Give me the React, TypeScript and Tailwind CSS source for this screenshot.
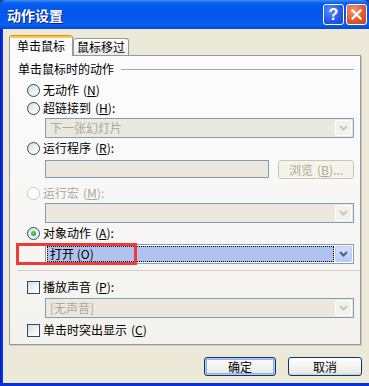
import React from "react";

const font = "font-['Noto_Sans_CJK_SC','Noto_Sans',sans-serif]";

function Chevron({ color }: { color: string }) {
  return (
    <svg width="9" height="6" viewBox="0 0 9 6">
      <path d="M1 1 L4.5 4.5 L8 1" fill="none" stroke={color} strokeWidth="2" />
    </svg>
  );
}

function Radio({ checked, disabled }: { checked?: boolean; disabled?: boolean }) {
  return (
    <span
      className={`flex h-[13px] w-[13px] shrink-0 items-center justify-center rounded-full border ${
        disabled
          ? "border-[#cac8bb] bg-white"
          : "border-[#1c5180] bg-[linear-gradient(135deg,#dcdad0_0%,#f4f4f0_60%,#ffffff_100%)]"
      }`}
    >
      {checked && <span className="h-[5px] w-[5px] rounded-full bg-[radial-gradient(circle_at_35%_35%,#55d855,#1a9c1a)]" />}
    </span>
  );
}

function Checkbox() {
  return (
    <span className="h-[13px] w-[13px] shrink-0 border border-[#1c5180] bg-[linear-gradient(135deg,#dcdad0_0%,#f4f4f0_60%,#ffffff_100%)]" />
  );
}

function Combo({ text, disabled, selected }: { text: string; disabled?: boolean; selected?: boolean }) {
  return (
    <div
      className={`flex h-[20px] items-center border border-[#7f9db9] ${
        disabled ? "bg-[#ebe9dd]" : "bg-white"
      }`}
    >
      <div className="flex h-full flex-1 items-center p-[1px]">
        {selected ? (
          <div className="flex h-full flex-1 items-center border border-dotted border-black bg-[#afc3ee] pl-[2px] leading-none">
            {text}
          </div>
        ) : (
          <div className={`pl-[3px] leading-none ${disabled ? "text-[#aca899]" : ""}`}>{text}</div>
        )}
      </div>
      <div
        className={`mr-[1px] flex h-[16px] w-[17px] items-center justify-center rounded-[2px] border ${
          disabled
            ? "border-white bg-[#f2f1ec]"
            : "border-[#b9ccf5] bg-[linear-gradient(to_bottom,#d3defc,#b7cbf8)]"
        }`}
      >
        <Chevron color={disabled ? "#c9c7ba" : "#4d6185"} />
      </div>
    </div>
  );
}

function Mn({ children }: { children: string }) {
  return (
    <span className="ml-[4px]">
      (<u>{children}</u>)
    </span>
  );
}

export default function App() {
  return (
    <div className={`flex h-[386px] w-[369px] flex-col overflow-hidden bg-[#1d3f91] text-[12px] text-black ${font}`}>
      {/* title bar */}
      <div className="flex h-[29px] items-center rounded-t-[6px] bg-[linear-gradient(to_bottom,#3d8ffb_0%,#0c62ec_10%,#0058ee_25%,#0556ea_55%,#0760ef_85%,#0348d4_100%)] pl-[7px] pr-[2px]">
        <span className="flex-1 text-[14px] font-bold leading-none text-white [text-shadow:1px_1px_0_#0a1e8c]">
          动作设置
        </span>
        <div className="flex items-center gap-[2px]">
          <div className="flex h-[21px] w-[21px] items-center justify-center rounded-[3px] border border-white bg-[radial-gradient(circle_at_35%_30%,#5c8ffb,#2257e6_60%,#1a47c8)] text-[16px] font-bold leading-none text-white font-['Liberation_Sans',sans-serif]">
            ?
          </div>
          <div className="flex h-[21px] w-[21px] items-center justify-center rounded-[3px] border border-white bg-[radial-gradient(circle_at_35%_30%,#f09a7a,#e05a30_55%,#c4401c)]">
            <svg width="11" height="11" viewBox="0 0 11 11">
              <path d="M1.5 1.5 L9.5 9.5 M9.5 1.5 L1.5 9.5" stroke="white" strokeWidth="2.2" strokeLinecap="square" />
            </svg>
          </div>
        </div>
      </div>

      <div className="flex flex-1">
        <div className="w-[3px] bg-[linear-gradient(to_right,#0019cf,#0a3de0)]" />
        <div className="flex flex-1 flex-col bg-[#ece9d8] pl-[6px] pt-[6px]">
          {/* tabs */}
          <div className="flex h-[21px] items-end">
            <div className="relative z-10 flex h-[21px] w-[64px] flex-col overflow-hidden rounded-t-[3px] border-x border-[#919b9c] bg-[#fcfcfe]">
              <div className="h-[1px] bg-[#e68b2c]" />
              <div className="h-[2px] bg-[#ffc73c]" />
              <div className="flex flex-1 items-center justify-center pb-[2px] leading-none">单击鼠标</div>
            </div>
            <div className="mb-px flex h-[17px] w-[56px] items-center justify-center rounded-t-[3px] border border-b-0 border-[#919b9c] bg-[linear-gradient(to_bottom,#ffffff,#ecebe6)] leading-none">
              鼠标移过
            </div>
          </div>

          {/* panel */}
          <div className="-mt-px flex h-[290px] w-[352px] flex-col border border-[#919b9c] bg-[linear-gradient(to_bottom,#fcfcfe,#f3f2ed)] shadow-[1px_1px_0_#d0cebf]">
            <div className="mt-[5px] flex h-[16px] items-center pl-[8px] pr-[6px]">
              <span className="leading-none">单击鼠标时的动作</span>
              <div className="ml-[7px] h-px flex-1 bg-[#aca899]" />
            </div>

            <div className="mt-[5px] flex h-[16px] items-center gap-[3px] pl-[17px] leading-none">
              <Radio />
              <span>
                无动作<Mn>N</Mn>
              </span>
            </div>

            <div className="mt-[2px] flex h-[16px] items-center gap-[3px] pl-[17px] leading-none">
              <Radio />
              <span>
                超链接到<Mn>H</Mn>:
              </span>
            </div>
            <div className="ml-[35px] mr-[6px] mt-[2px]">
              <Combo text="下一张幻灯片" disabled />
            </div>

            <div className="mt-[2px] flex h-[16px] items-center gap-[3px] pl-[17px] leading-none">
              <Radio />
              <span>
                运行程序<Mn>R</Mn>:
              </span>
            </div>
            <div className="ml-[35px] mr-[6px] mt-[4px] flex items-start gap-[9px]">
              <div className="h-[18px] flex-1 border border-[#7f9db9] bg-[#ebe9dd]" />
              <div className="flex h-[19px] w-[76px] items-center justify-center rounded-[3px] border border-[#c9c7ba] bg-[#f5f4ea] leading-none text-[#aca899]">
                浏览<Mn>B</Mn>...
              </div>
            </div>

            <div className="mt-[6px] flex h-[16px] items-center gap-[3px] pl-[17px] leading-none text-[#aca899]">
              <Radio disabled />
              <span>
                运行宏<Mn>M</Mn>:
              </span>
            </div>
            <div className="ml-[35px] mr-[6px] mt-[2px]">
              <Combo text="" disabled />
            </div>

            <div className="mt-[2px] flex h-[16px] items-center gap-[3px] pl-[17px] leading-none">
              <Radio checked />
              <span>
                对象动作<Mn>A</Mn>:
              </span>
            </div>
            <div className="relative mt-[3px] pl-[35px] pr-[6px]">
              <Combo text="打开 (O)" selected />
              <div className="absolute left-[6px] top-[-1px] h-[22px] w-[121px] border-[3px] border-[#f03a3a]" />
            </div>

            <div className="ml-[8px] mt-[6px] h-px bg-[#d0d0bf]" />

            <div className="mt-[8px] flex h-[16px] items-center gap-[3px] pl-[17px] leading-none">
              <Checkbox />
              <span>
                播放声音<Mn>P</Mn>:
              </span>
            </div>
            <div className="ml-[35px] mr-[6px] mt-[3px]">
              <Combo text="[无声音]" disabled />
            </div>

            <div className="mt-[4px] flex h-[16px] items-center gap-[3px] pl-[17px] leading-none">
              <Checkbox />
              <span>
                单击时突出显示<Mn>C</Mn>
              </span>
            </div>
          </div>

          {/* buttons */}
          <div className="mt-[12px] flex justify-end gap-[12px] pr-[7px]">
            <div className="flex h-[19px] w-[72px] items-center justify-center rounded-[3px] border border-[#003c74] bg-[linear-gradient(to_bottom,#ffffff,#ecebe6_85%,#d6d0c5)] shadow-[inset_0_0_0_1px_#b4c9f3,inset_0_0_0_2px_#8eaef0] leading-none">
              确定
            </div>
            <div className="flex h-[19px] w-[74px] items-center justify-center rounded-[3px] border border-[#003c74] bg-[linear-gradient(to_bottom,#ffffff,#ecebe6_85%,#d6d0c5)] leading-none">
              取消
            </div>
          </div>
        </div>
      </div>
      <div className="h-[3px] bg-[#0831d9]" />
    </div>
  );
}
